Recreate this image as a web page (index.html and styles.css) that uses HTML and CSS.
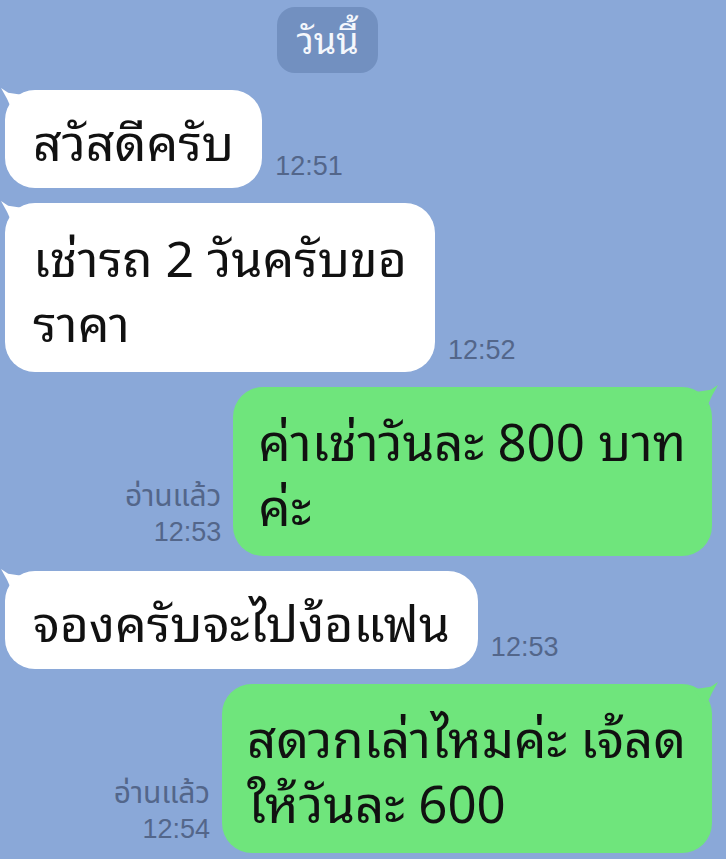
FILE: index.html
```html
<!DOCTYPE html>
<html lang="th">
<head>
    <meta charset="UTF-8">
    <meta name="viewport" content="width=device-width, initial-scale=1.0">
    <title>แชท</title>
    <link rel="stylesheet" href="styles.css">
</head>
<body>

    <div class="chat">
        <div class="date-row">
            <span class="date-pill">วันนี้</span>
        </div>

        <div class="row left">
            <div class="bubble in single">สวัสดีครับ</div>
            <div class="meta">12:51</div>
        </div>

        <div class="row left">
            <div class="bubble in">เช่ารถ 2 วันครับขอ<br>ราคา</div>
            <div class="meta">12:52</div>
        </div>

        <div class="row right">
            <div class="meta"><span class="read">อ่านแล้ว</span><br>12:53</div>
            <div class="bubble out">ค่าเช่าวันละ 800 บาท<br>ค่ะ</div>
        </div>

        <div class="row left">
            <div class="bubble in single">จองครับจะไปง้อแฟน</div>
            <div class="meta">12:53</div>
        </div>

        <div class="row right">
            <div class="meta"><span class="read">อ่านแล้ว</span><br>12:54</div>
            <div class="bubble out">สดวกเล่าไหมค่ะ เจ้ลด<br>ให้วันละ 600</div>
        </div>
    </div>

</body>
</html>
```

FILE: styles.css
```css
* {
    margin: 0;
    padding: 0;
    box-sizing: border-box;
}
body {
    font-family: "Noto Sans Thai Looped", "Noto Sans Thai", "Loma", "Garuda", "Noto Sans", "DejaVu Sans", sans-serif;
    background-color: #8aa8d8;
    width: 726px;
    height: 859px;
    overflow: hidden;
}
.chat {
    display: flex;
    flex-direction: column;
    gap: 15px;
    padding: 7px 14px 0 5px;
}
.date-row {
    display: flex;
    justify-content: center;
    margin-bottom: 2px;
    padding-right: 62px;
}
.date-pill {
    display: inline-block;
    width: 101px;
    height: 66px;
    line-height: 62px;
    text-align: center;
    font-size: 36px;
    color: #f4f7fc;
    background-color: #7290c0;
    border-radius: 18px;
}
.row {
    display: flex;
    align-items: flex-end;
}
.row.right {
    justify-content: flex-end;
}
.bubble {
    position: relative;
    font-size: 50px;
    line-height: 65px;
    color: #111;
    padding: 19px 28px 20px;
    border-radius: 30px;
}
.bubble.single {
    padding-top: 16px;
    padding-bottom: 17px;
}
.bubble.in {
    background-color: #fff;
}
.bubble.out {
    font-size: 51px;
    background-color: #6fe57c;
    padding-left: 25px;
    padding-right: 26px;
}
.bubble.in::before {
    content: "";
    position: absolute;
    left: -4px;
    top: -2px;
    width: 24px;
    height: 24px;
    background-color: #fff;
    clip-path: polygon(0 0, 30% 20%, 100% 30%, 50% 100%, 25% 45%);
}
.bubble.out::before {
    content: "";
    position: absolute;
    right: -6px;
    top: -2px;
    width: 24px;
    height: 24px;
    background-color: #6fe57c;
    clip-path: polygon(100% 0, 70% 20%, 0 30%, 50% 100%, 75% 45%);
}
.meta {
    font-family: "Liberation Sans", Arial, "Noto Sans Thai", sans-serif;
    font-size: 27px;
    line-height: 35px;
    color: #53668a;
    padding-bottom: 6px;
}
.read {
    font-size: 30px;
}
.row.left .meta {
    margin-left: 13px;
    padding-bottom: 4px;
}
.row.right .meta {
    text-align: right;
    margin-right: 12px;
}
```
